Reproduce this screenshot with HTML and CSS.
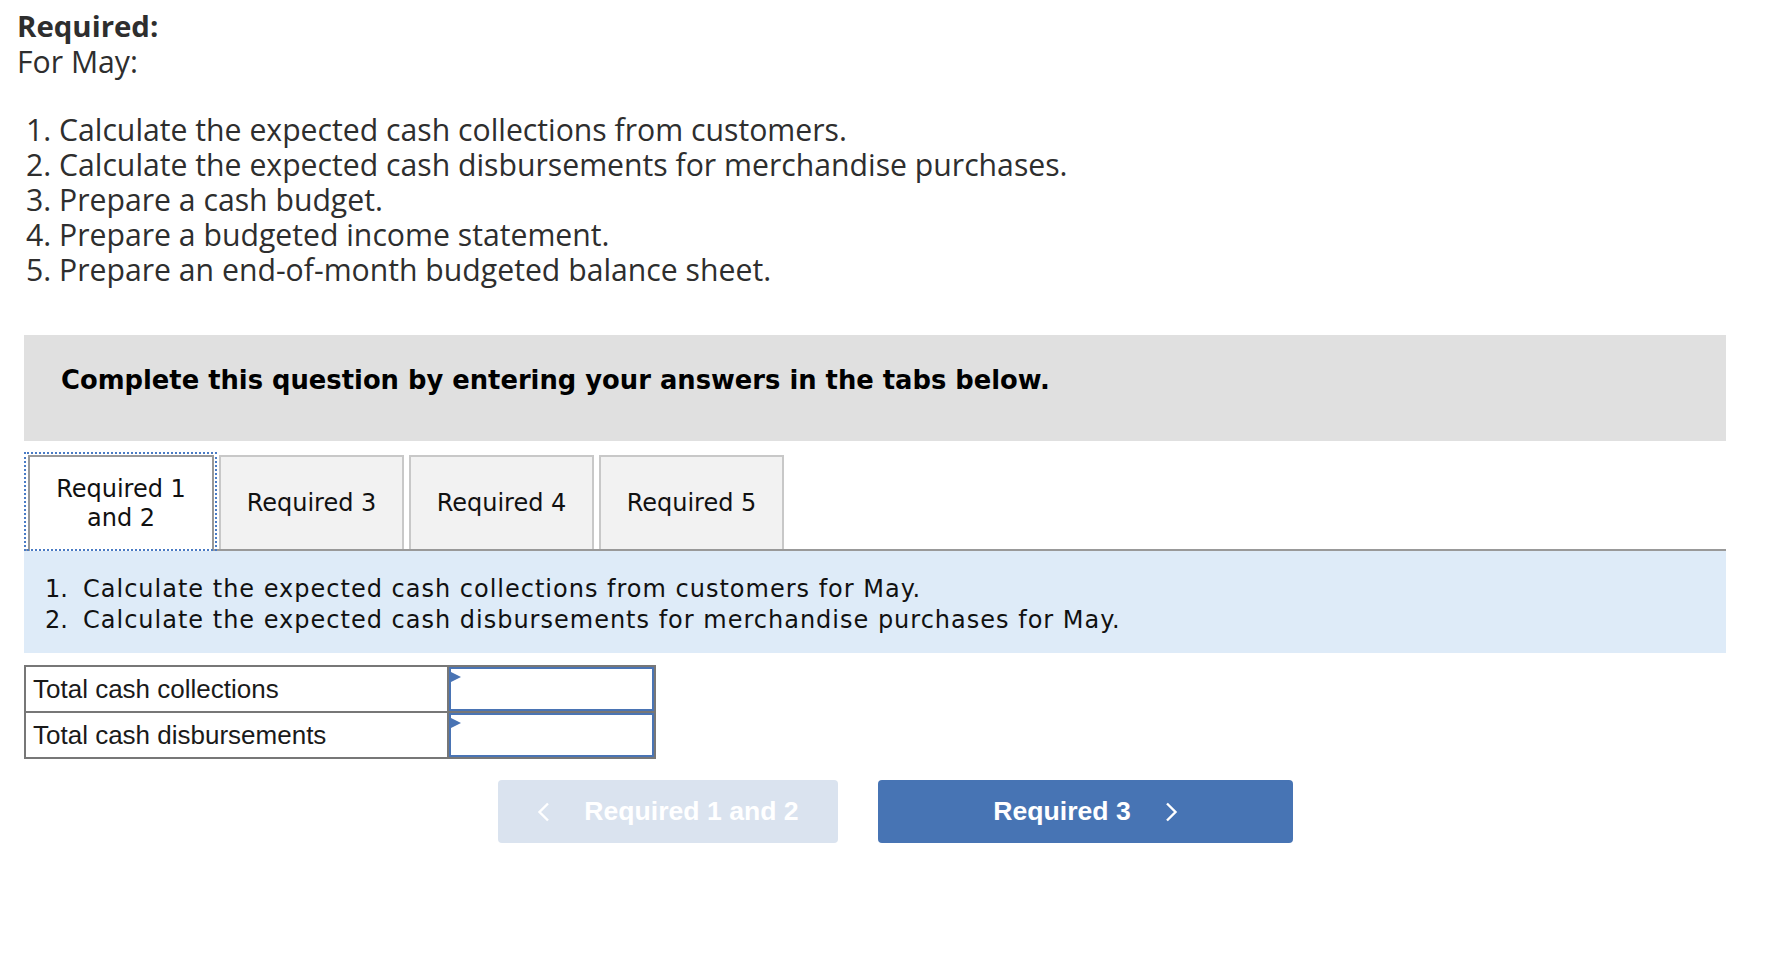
FILE: index.html
```html
<!DOCTYPE html>
<html lang="en">
<head>
<meta charset="utf-8">
<title>Required</title>
<link rel="stylesheet" href="styles.css">
</head>
<body>
<div class="intro">
  <p class="req-title">Required:</p>
  <p class="req-sub">For May:</p>
  <ol class="req-list">
    <li>Calculate the expected cash collections from customers.</li>
    <li>Calculate the expected cash disbursements for merchandise purchases.</li>
    <li>Prepare a cash budget.</li>
    <li>Prepare a budgeted income statement.</li>
    <li>Prepare an end-of-month budgeted balance sheet.</li>
  </ol>
</div>
<div class="content">
  <div class="banner">Complete this question by entering your answers in the tabs below.</div>
  <div class="tabs">
    <div class="tab active">Required 1 and 2</div>
    <div class="tab">Required 3</div>
    <div class="tab">Required 4</div>
    <div class="tab">Required 5</div>
  </div>
  <div class="instructions">
    <div class="instr-line"><span class="instr-num">1.</span><span>Calculate the expected cash collections from customers for May.</span></div>
    <div class="instr-line"><span class="instr-num">2.</span><span>Calculate the expected cash disbursements for merchandise purchases for May.</span></div>
  </div>
  <div class="answer">
    <div class="label-cell">Total cash collections</div>
    <div class="input-cell"></div>
    <div class="label-cell">Total cash disbursements</div>
    <div class="input-cell"></div>
  </div>
  <div class="nav">
    <div class="btn btn-prev">
      <svg class="chev" width="13" height="20" viewBox="0 0 13 20"><polyline points="11,1.5 2.5,10 11,18.5" fill="none" stroke="#fff" stroke-width="2.4"/></svg>
      <span>Required 1 and 2</span>
    </div>
    <div class="btn btn-next">
      <span>Required 3</span>
      <svg class="chev" width="13" height="20" viewBox="0 0 13 20"><polyline points="2,1.5 10.5,10 2,18.5" fill="none" stroke="#fff" stroke-width="2.4"/></svg>
    </div>
  </div>
</div>
</body>
</html>
```
FILE: styles.css
```css
html, body {
  margin: 0;
  padding: 0;
  background: #fff;
}

.intro {
  padding: 9px 0 0 17px;
  font-family: "Open Sans", Lato, sans-serif;
  font-size: 30.2px;
  line-height: 35px;
  color: #2e2e2e;
}

.req-title {
  margin: 0;
  font-weight: 700;
  font-size: 29.4px;
}

.req-sub {
  margin: 0 0 33px 0;
}

.req-list {
  margin: 0;
  padding-left: 42px;
}

.content {
  margin: 48px 42px 0 24px;
}

.banner {
  background: #e0e0e0;
  padding: 30px 37px 46px;
  font-family: "DejaVu Sans", Verdana, sans-serif;
  font-weight: 700;
  font-size: 25.8px;
  color: #000;
}

.tabs {
  display: flex;
  align-items: flex-end;
  gap: 5px;
  margin-top: 14px;
  padding-left: 4px;
  border-bottom: 2px solid #999;
}

.tab {
  box-sizing: border-box;
  width: 185px;
  height: 94px;
  padding: 0 12px;
  border: 2px solid #c8c8c8;
  border-bottom: none;
  background: #f2f2f2;
  display: flex;
  align-items: center;
  justify-content: center;
  text-align: center;
  font-family: "DejaVu Sans", Verdana, sans-serif;
  font-size: 24px;
  line-height: 29px;
  color: #111;
}

.tab.active {
  width: 186px;
  height: 96px;
  margin-bottom: -2px;
  border-color: #999;
  background: #fff;
  position: relative;
  z-index: 1;
}

.tab.active::after {
  content: "";
  position: absolute;
  left: -6px;
  right: -5px;
  top: -5px;
  bottom: 0;
  border: 2px dotted #4a7bc4;
}

.instructions {
  background: #deebf8;
  padding: 23px 0 17px 21px;
  font-family: "DejaVu Sans", Verdana, sans-serif;
  font-size: 24px;
  letter-spacing: 1px;
  line-height: 31px;
  color: #111;
}

.instr-line {
  display: flex;
}

.instr-num {
  width: 38px;
  flex: none;
  letter-spacing: 0;
}

.answer {
  margin-top: 12px;
  display: grid;
  grid-template-columns: 421px 205px;
  grid-auto-rows: 44px;
  gap: 2px;
  width: max-content;
  background: #777;
  border: 2px solid #777;
}

.label-cell {
  background: #fff;
  display: flex;
  align-items: center;
  padding-left: 7px;
  font-family: "Liberation Sans", Arial, sans-serif;
  font-size: 26px;
  color: #1a1a1a;
}

.input-cell {
  box-sizing: border-box;
  background: #fff;
  border: 2px solid #4a74b4;
  position: relative;
}

.input-cell::before {
  content: "";
  position: absolute;
  left: 0;
  top: 3px;
  width: 0;
  height: 0;
  border-left: 10px solid #4a74b4;
  border-top: 5px solid transparent;
  border-bottom: 5px solid transparent;
}

.nav {
  display: flex;
  gap: 40px;
  margin-top: 21px;
  padding-left: 474px;
}

.btn {
  box-sizing: border-box;
  height: 63px;
  border-radius: 4px;
  display: flex;
  align-items: center;
  justify-content: center;
  gap: 34px;
  font-family: "Liberation Sans", Arial, sans-serif;
  font-weight: 700;
  font-size: 26.6px;
  color: #fff;
}

.btn-prev {
  width: 340px;
  background: #dae3ef;
}

.btn-next {
  width: 415px;
  background: #4774b4;
}

.chev {
  display: block;
  flex: none;
}
```
